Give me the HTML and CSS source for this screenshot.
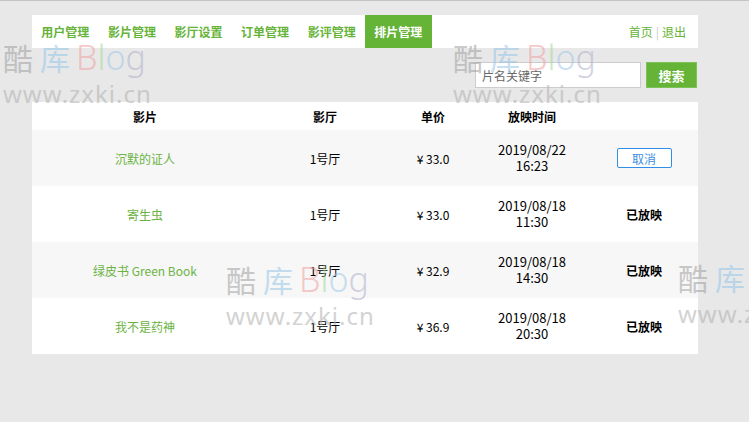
FILE: index.html
```html
<!DOCTYPE html>
<html lang="zh-CN">
<head>
  <meta charset="UTF-8">
  <link rel="stylesheet" href="styles.css">
  <title>排片管理</title>
</head>
<body>
  <div class="topline"></div>
  <div id="wrap">
    <div id="nav">
      <a class="navItem">用户管理</a>
      <a class="navItem">影片管理</a>
      <a class="navItem">影厅设置</a>
      <a class="navItem">订单管理</a>
      <a class="navItem">影评管理</a>
      <a class="navItem active">排片管理</a>
      <div class="navRight">
        <a>首页</a><span class="sep">|</span><a>退出</a>
      </div>
    </div>

    <div id="searchBar">
      <input type="text" class="searchInput" placeholder="片名关键字">
      <button class="btnSearch">搜索</button>
    </div>

    <table id="scheduleTable">
      <colgroup>
        <col style="width:226px">
        <col style="width:134px">
        <col style="width:82px">
        <col style="width:116px">
        <col>
      </colgroup>
      <thead>
        <tr>
          <th>影片</th>
          <th>影厅</th>
          <th>单价</th>
          <th>放映时间</th>
          <th></th>
        </tr>
      </thead>
      <tbody>
        <tr>
          <td class="film">沉默的证人</td>
          <td>1号厅</td>
          <td>¥ 33.0</td>
          <td class="time">2019/08/22<br>16:23</td>
          <td><button class="btnCancel">取消</button></td>
        </tr>
        <tr>
          <td class="film">寄生虫</td>
          <td>1号厅</td>
          <td>¥ 33.0</td>
          <td class="time">2019/08/18<br>11:30</td>
          <td class="done">已放映</td>
        </tr>
        <tr>
          <td class="film">绿皮书 Green Book</td>
          <td>1号厅</td>
          <td>¥ 32.9</td>
          <td class="time">2019/08/18<br>14:30</td>
          <td class="done">已放映</td>
        </tr>
        <tr>
          <td class="film">我不是药神</td>
          <td>1号厅</td>
          <td>¥ 36.9</td>
          <td class="time">2019/08/18<br>20:30</td>
          <td class="done">已放映</td>
        </tr>
      </tbody>
    </table>
  </div>

  <!-- 水印 -->
  <div class="wm wm1"><div class="wmLogo"><span class="k1">酷</span><span class="k2">库</span><span class="b1">B</span><span class="b2">l</span><span class="b3">o</span><span class="b4">g</span></div><div class="wmUrl">www.zxki.cn</div></div>
  <div class="wm wm2"><div class="wmLogo"><span class="k1">酷</span><span class="k2">库</span><span class="b1">B</span><span class="b2">l</span><span class="b3">o</span><span class="b4">g</span></div><div class="wmUrl">www.zxki.cn</div></div>
  <div class="wm wm3"><div class="wmLogo"><span class="k1">酷</span><span class="k2">库</span><span class="b1">B</span><span class="b2">l</span><span class="b3">o</span><span class="b4">g</span></div><div class="wmUrl">www.zxki.cn</div></div>
  <div class="wm wm4"><div class="wmLogo"><span class="k1">酷</span><span class="k2">库</span></div><div class="wmUrl">www.z</div></div>
</body>
</html>
```

FILE: styles.css
```css
html, body {
  margin: 0;
  padding: 0;
}
body {
  background: #e8e8e8;
  font-family: "Noto Sans CJK SC", "Noto Sans", sans-serif;
  font-size: 12px;
  color: #000000;
  height: 422px;
  overflow: hidden;
  position: relative;
}
.topline {
  height: 1px;
  background: #c4c4c4;
}
#wrap {
  width: 666px;
  margin: 14px 0 0 32px;
}

/* 상단 메뉴 */
#nav {
  display: flex;
  height: 33px;
  background: #ffffff;
}
.navItem {
  display: block;
  width: 66.6px;
  line-height: 33px;
  text-align: center;
  color: #65b337;
  font-weight: bold;
  font-size: 12px;
  cursor: pointer;
}
.navItem.active {
  background: #65b337;
  color: #ffffff;
}
.navRight {
  margin-left: auto;
  padding-right: 12px;
  line-height: 33px;
  color: #65b337;
  font-size: 12px;
}
.navRight .sep {
  color: #cccccc;
  margin: 0 3px;
}

#searchBar {
  display: flex;
  justify-content: flex-end;
  gap: 5px;
  padding: 14px 1px 14px 0;
  height: 54px;
  box-sizing: border-box;
}
.searchInput {
  width: 166px;
  height: 26px;
  box-sizing: border-box;
  border: 1px solid #cccccc;
  padding: 0 6px;
  font-family: inherit;
  font-size: 12px;
  outline: none;
}
.searchInput::placeholder {
  color: #666666;
}
.btnSearch {
  width: 51px;
  height: 26px;
  border: 1px solid #7cc257;
  background: #65b337;
  color: #ffffff;
  font-family: inherit;
  font-size: 13px;
  font-weight: bold;
  cursor: pointer;
}

#scheduleTable {
  width: 666px;
  border-collapse: collapse;
  table-layout: fixed;
  background: #ffffff;
}
#scheduleTable th {
  height: 28px;
  padding: 0;
  font-weight: bold;
  font-size: 12px;
  text-align: center;
}
#scheduleTable td {
  height: 56px;
  padding: 0;
  text-align: center;
  font-size: 12px;
}
#scheduleTable tbody tr:nth-child(odd) {
  background: #f7f7f7;
}
#scheduleTable td.film {
  color: #6cb344;
}
#scheduleTable td.time {
  font-size: 13px;
  line-height: 16px;
}
#scheduleTable td.done {
  font-weight: bold;
}
.btnCancel {
  width: 55px;
  height: 20px;
  background: #ffffff;
  border: 1px solid #2f8ee8;
  border-radius: 2px;
  color: #3d8fe0;
  font-family: inherit;
  font-size: 12px;
  padding: 0;
  cursor: pointer;
}

/* 워터마크 */
.wm {
  position: absolute;
  pointer-events: none;
  opacity: 0.55;
  font-family: "Noto Sans", "Noto Sans CJK SC", sans-serif;
}
.wm1 { left: 3px; top: 35px; }
.wm2 { left: 453px; top: 35px; }
.wm3 { left: 226px; top: 257px; }
.wm4 { left: 678px; top: 257px; }
.wmLogo {
  font-size: 30px;
  line-height: 44px;
  white-space: nowrap;
}
.wmLogo .k1 { color: #a0a0a0; margin-right: 7px; }
.wmLogo .k2 { color: #98c6e8; margin-right: 6px; }
.wmLogo .b1 { color: #f0a0a0; font-size: 34px; font-weight: 300; }
.wmLogo .b2 { color: #a0d898; font-size: 34px; font-weight: 300; }
.wmLogo .b3 { color: #a0c8e8; font-size: 34px; font-weight: 300; }
.wmLogo .b4 { color: #b0b0cc; font-size: 34px; font-weight: 300; }
.wmUrl {
  margin-top: 0;
  font-size: 24px;
  line-height: 26px;
  color: #b0b0b0;
  letter-spacing: 1px;
  white-space: nowrap;
}
```
